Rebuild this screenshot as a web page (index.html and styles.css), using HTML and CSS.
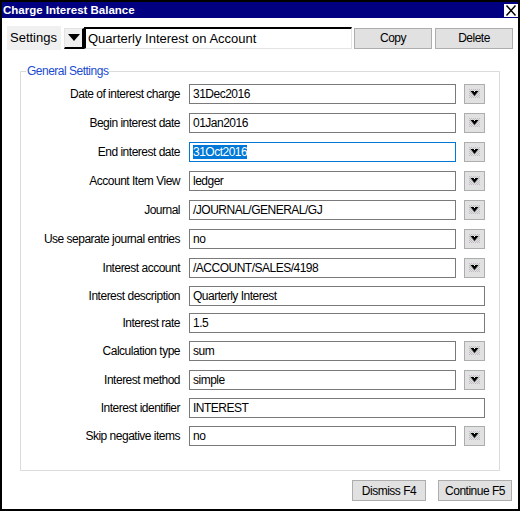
FILE: index.html
```html
<!DOCTYPE html>
<html lang="en">
<head>
  <meta charset="UTF-8">
  <title>Charge Interest Balance</title>
  <link rel="stylesheet" href="styles.css">
</head>
<body>
  <div class="window">
    <div class="titlebar">
      <span class="title">Charge Interest Balance</span>
      <button class="close" aria-label="Close">
        <svg width="12" height="11" viewBox="0 0 12 11"><path d="M1.5 0.5L10.5 10.5M10.5 0.5L1.5 10.5" stroke="#000" stroke-width="1.4" fill="none"/></svg>
      </button>
    </div>

    <div class="settings">
      <span class="settings-label">Settings</span>
      <button class="settings-drop">
        <svg width="12" height="7" viewBox="0 0 12 7"><path d="M0 0H12L6 7Z" fill="#000"/></svg>
      </button>
      <div class="settings-input">Quarterly Interest on Account</div>
      <button class="btn">Copy</button>
      <button class="btn">Delete</button>
    </div>

    <fieldset class="group">
      <legend>General Settings</legend>

      <div class="row">
        <label>Date of interest charge</label>
        <div class="field">31Dec2016</div>
        <button class="drop"><svg width="11" height="9" viewBox="0 0 11 9"><use href="#arrow"/></svg></button>
      </div>
      <div class="row">
        <label>Begin interest date</label>
        <div class="field">01Jan2016</div>
        <button class="drop"><svg width="11" height="9" viewBox="0 0 11 9"><use href="#arrow"/></svg></button>
      </div>
      <div class="row">
        <label>End interest date</label>
        <div class="field focused"><span class="sel">31Oct2016</span></div>
        <button class="drop"><svg width="11" height="9" viewBox="0 0 11 9"><use href="#arrow"/></svg></button>
      </div>
      <div class="row">
        <label>Account Item View</label>
        <div class="field">ledger</div>
        <button class="drop"><svg width="11" height="9" viewBox="0 0 11 9"><use href="#arrow"/></svg></button>
      </div>
      <div class="row">
        <label>Journal</label>
        <div class="field">/JOURNAL/GENERAL/GJ</div>
        <button class="drop"><svg width="11" height="9" viewBox="0 0 11 9"><use href="#arrow"/></svg></button>
      </div>
      <div class="row">
        <label>Use separate journal entries</label>
        <div class="field">no</div>
        <button class="drop"><svg width="11" height="9" viewBox="0 0 11 9"><use href="#arrow"/></svg></button>
      </div>
      <div class="row">
        <label>Interest account</label>
        <div class="field">/ACCOUNT/SALES/4198</div>
        <button class="drop"><svg width="11" height="9" viewBox="0 0 11 9"><use href="#arrow"/></svg></button>
      </div>
      <div class="row text">
        <label>Interest description</label>
        <div class="field">Quarterly Interest</div>
      </div>
      <div class="row text">
        <label>Interest rate</label>
        <div class="field">1.5</div>
      </div>
      <div class="row">
        <label>Calculation type</label>
        <div class="field">sum</div>
        <button class="drop"><svg width="11" height="9" viewBox="0 0 11 9"><use href="#arrow"/></svg></button>
      </div>
      <div class="row">
        <label>Interest method</label>
        <div class="field">simple</div>
        <button class="drop"><svg width="11" height="9" viewBox="0 0 11 9"><use href="#arrow"/></svg></button>
      </div>
      <div class="row text">
        <label>Interest identifier</label>
        <div class="field">INTEREST</div>
      </div>
      <div class="row">
        <label>Skip negative items</label>
        <div class="field">no</div>
        <button class="drop"><svg width="11" height="9" viewBox="0 0 11 9"><use href="#arrow"/></svg></button>
      </div>
    </fieldset>

    <div class="footer">
      <button class="btn">Dismiss F4</button>
      <button class="btn">Continue F5</button>
    </div>
  </div>

  <svg width="0" height="0" class="defs">
    <defs>
      <pattern id="dots" width="2" height="2" patternUnits="userSpaceOnUse">
        <rect width="1" height="1" fill="#c4b8c8"/>
        <rect x="1" y="1" width="1" height="1" fill="#b8c4b8"/>
      </pattern>
      <g id="arrow">
        <rect width="11" height="9" fill="url(#dots)"/>
        <path d="M1.5 2H9.5L5.5 7Z" fill="#000"/>
        <rect x="5" y="2" width="1" height="1" fill="#fff"/>
      </g>
    </defs>
  </svg>
</body>
</html>
```

FILE: styles.css
```css
* {
  box-sizing: border-box;
}
body {
  margin: 0;
  background: #fff;
  font-family: 'Liberation Sans', Arial, sans-serif;
  font-size: 12px;
  letter-spacing: -0.5px;
  color: #000;
}
.defs {
  position: absolute;
}
.window {
  width: 520px;
  height: 511px;
  border: 2px solid #000;
  background: #fff;
  display: flex;
  flex-direction: column;
}
.titlebar {
  height: 16px;
  background: #000080;
  color: #fff;
  display: flex;
  align-items: center;
  justify-content: space-between;
  padding-left: 1px;
}
.title {
  font-weight: bold;
  font-size: 11.5px;
  letter-spacing: 0;
}
.close {
  width: 14px;
  height: 13px;
  margin: 1px 0 0 0;
  padding: 0;
  border: none;
  background: #fff;
  display: flex;
  align-items: center;
  justify-content: center;
}
.settings {
  display: flex;
  align-items: center;
  margin: 8px 0 0 5px;
  height: 24px;
}
.settings-label {
  background: #f0f0f0;
  font-size: 13px;
  letter-spacing: 0;
  width: 54px;
  height: 24px;
  line-height: 24px;
  padding-left: 3px;
}
.settings-drop {
  width: 20px;
  height: 21px;
  margin-left: 3px;
  padding: 0;
  background: #f0f0f0;
  border-style: solid;
  border-width: 1px 2px 2px 1px;
  border-color: #e3e3e3 #000 #000 #e3e3e3;
  display: flex;
  align-items: center;
  justify-content: center;
}
.settings-input {
  width: 268px;
  height: 22px;
  font-size: 13px;
  letter-spacing: 0;
  line-height: 19px;
  padding-left: 2px;
  border-style: solid;
  border-width: 2px 1px 1px 2px;
  border-color: #000 #e3e3e3 #e3e3e3 #000;
}
.btn {
  font-family: 'Liberation Sans', Arial, sans-serif;
  font-size: 12px;
  letter-spacing: -0.5px;
  color: #000;
  background: #e1e1e1;
  border: 1px solid #adadad;
  width: 78px;
  height: 21px;
  padding: 0;
  margin-left: 2px;
}
.settings .btn + .btn {
  margin-left: 3px;
}
.group {
  margin: 14px 18px 0 18px;
  padding: 1px 0 20px 0;
  border: 1px solid #dcdcdc;
  min-width: 0;
}
.group legend {
  color: #1a4bd0;
  margin-left: 5px;
  padding: 0 1px;
  line-height: 14px;
}
.row {
  display: flex;
  align-items: center;
  height: 29px;
}
.row.text {
  height: 27px;
}
.row label {
  width: 159px;
  text-align: right;
  white-space: nowrap;
}
.field {
  margin-left: 9px;
  width: 267px;
  height: 20px;
  border: 1px solid #7a7a7a;
  padding-left: 3px;
  line-height: 18px;
  white-space: nowrap;
}
.row.text .field {
  width: 296px;
}
.field.focused {
  border-color: #0078d7;
}
.sel {
  background: #0078d7;
  color: #fff;
}
.drop {
  width: 21px;
  height: 20px;
  margin-left: 8px;
  padding: 0;
  background: #e1e1e1;
  border: 1px solid #adadad;
  display: flex;
  align-items: center;
  justify-content: center;
}
.footer {
  display: flex;
  justify-content: flex-end;
  gap: 12px;
  margin: 9px 6px 0 0;
}
.footer .btn {
  width: 74px;
  margin: 0;
}
```
